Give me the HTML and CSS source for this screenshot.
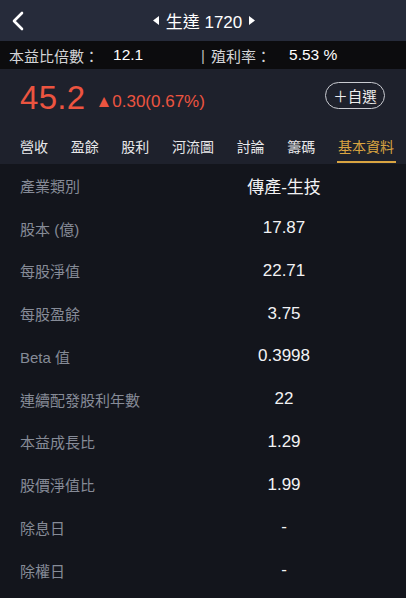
FILE: index.html
```html
<!DOCTYPE html>
<html lang="zh-Hant">
<head>
<meta charset="utf-8">
<link rel="stylesheet" href="styles.css">
</head>
<body>
<div class="app">
  <header class="topbar">
    <svg class="back" width="14" height="20" viewBox="0 0 14 20"><path d="M11 2 L3 10 L11 18" fill="none" stroke="#fff" stroke-width="2.6" stroke-linecap="round" stroke-linejoin="round"/></svg>
    <div class="title">
      <svg class="tri" width="6" height="9" viewBox="0 0 6 9"><path d="M6 0 L0 4.5 L6 9 Z" fill="#fff"/></svg>
      <span>生達 1720</span>
      <svg class="tri" width="6" height="9" viewBox="0 0 6 9"><path d="M0 0 L6 4.5 L0 9 Z" fill="#fff"/></svg>
    </div>
  </header>
  <div class="strip">
    <span class="s-label">本益比倍數：</span>
    <span class="s-val pe">12.1</span>
    <span class="s-sep">|</span>
    <span class="s-label">殖利率：</span>
    <span class="s-val yld">5.53 %</span>
  </div>
  <section class="price">
    <span class="last">45.2</span>
    <span class="chg">▲0.30(0.67%)</span>
    <span class="watch">＋自選</span>
  </section>
  <nav class="tabs">
    <span class="tab">營收</span>
    <span class="tab">盈餘</span>
    <span class="tab">股利</span>
    <span class="tab">河流圖</span>
    <span class="tab">討論</span>
    <span class="tab">籌碼</span>
    <span class="tab active">基本資料</span>
  </nav>
  <main class="list">
    <div class="row"><span class="lbl">產業類別</span><span class="val">傳產-生技</span></div>
    <div class="row"><span class="lbl">股本 (億)</span><span class="val">17.87</span></div>
    <div class="row"><span class="lbl">每股淨值</span><span class="val">22.71</span></div>
    <div class="row"><span class="lbl">每股盈餘</span><span class="val">3.75</span></div>
    <div class="row"><span class="lbl">Beta 值</span><span class="val">0.3998</span></div>
    <div class="row"><span class="lbl">連續配發股利年數</span><span class="val">22</span></div>
    <div class="row"><span class="lbl">本益成長比</span><span class="val">1.29</span></div>
    <div class="row"><span class="lbl">股價淨值比</span><span class="val">1.99</span></div>
    <div class="row"><span class="lbl">除息日</span><span class="val">-</span></div>
    <div class="row"><span class="lbl">除權日</span><span class="val">-</span></div>
  </main>
</div>
</body>
</html>
```

FILE: styles.css
```css
* { box-sizing: border-box; }
html, body { margin: 0; padding: 0; background: #13151c; }
body {
  font-family: "Liberation Sans", "Noto Sans CJK TC", sans-serif;
  color: #fff;
  width: 406px;
  height: 598px;
  overflow: hidden;
}
.app { width: 406px; }

.topbar {
  height: 41px;
  background: #262b3a;
  position: relative;
  display: flex;
  align-items: center;
  justify-content: center;
}
.back { position: absolute; left: 11px; top: 11px; }
.title {
  display: flex;
  align-items: center;
  gap: 7px;
  font-size: 17px;
  color: #fff;
  margin-left: 2px;
}

.strip {
  height: 28px;
  background: #0c0c0e;
  display: flex;
  align-items: center;
  padding-left: 9px;
  font-size: 15px;
  color: #d8d8da;
}
.s-label { color: #d4d4d7; }
.s-val { color: #fff; font-size: 15.5px; }
.pe { margin-left: 14px; width: 86px; }
.s-sep { color: #bbb; margin-left: 2px; width: 10px; }
.yld { margin-left: 18px; }

.price {
  height: 52px;
  background: #1e212c;
  display: flex;
  align-items: center;
  padding: 5px 20px 0 20px;
}
.last {
  font-size: 33px;
  color: #ec5440;
  letter-spacing: 0.3px;
}
.chg {
  font-size: 17px;
  color: #ec5440;
  margin-left: 10px;
  margin-top: 8px;
}
.watch {
  margin-left: auto;
  height: 27px;
  width: 60px;
  border: 1px solid #c9cbd1;
  border-radius: 14px;
  display: flex;
  align-items: center;
  justify-content: center;
  font-size: 14.5px;
  color: #eee;
  margin-top: -4px;
  margin-right: 1px;
}

.tabs {
  height: 43px;
  background: #1e212c;
  display: flex;
  justify-content: space-between;
  align-items: stretch;
  padding: 0 12px 0 20px;
}
.tab {
  font-size: 14px;
  color: #e8e8ea;
  display: flex;
  align-items: center;
  padding-top: 6px;
  position: relative;
}
.tab.active { color: #d9a441; }
.tab.active::after {
  content: "";
  position: absolute;
  left: -1px;
  right: -2px;
  bottom: 1px;
  height: 2px;
  background: #d9a441;
}

.list { background: #13151c; }
.row {
  height: 42.75px;
  display: grid;
  grid-template-columns: 142px 1fr;
  align-items: center;
  padding-left: 20px;
}
.lbl { font-size: 15px; color: #868b97; }
.val { font-size: 17px; color: #f2f2f4; text-align: center; }
```
